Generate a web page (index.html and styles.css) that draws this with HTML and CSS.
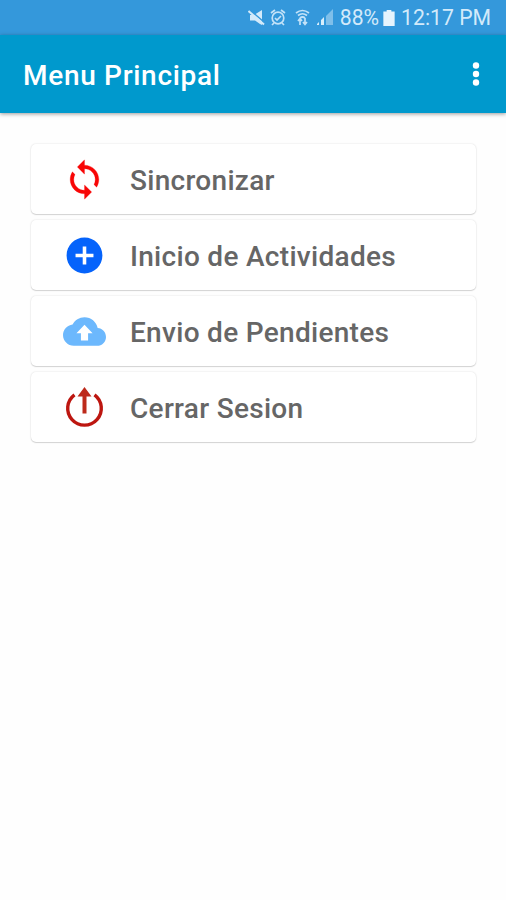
FILE: index.html
```html
<!DOCTYPE html>
<html lang="es">
<head>
<meta charset="utf-8">
<title>Menu Principal</title>
<link rel="stylesheet" href="styles.css">
</head>
<body>
<div class="status">
  <svg class="status-icons" width="86" height="20" viewBox="0 0 86 20">
    <path fill="#d3eafa" d="M2 6h4l8-5v15l-2-1-5-3.500H2z"/>
    <path d="M1.500 .500l15 13" stroke="#3498db" stroke-width="1.500"/>
    <path d="M.5 2l15.500 13.500" stroke="#d3eafa" stroke-width="2"/>
    <g fill="none" stroke="#c3e2f8" stroke-width="1.700">
      <circle cx="30" cy="9" r="5.800"/>
      <path d="M23 4l4-3M37 4l-4-3M27 9l2 2 4-4M26 14l-2 2M34 14l2 2"/>
      <path d="M48 4q6.500-5 13 0M50 6.500q4.500-3.500 9 0M52 9q2.500-2 5 0"/>
      <path d="M52 10v6M50 12l2-2.500 2 2.500M57 9v6M55 13l2 2.500 2-2.500"/>
    </g>
    <path fill="#7fbfea" d="M85 0v16h-7V7z"/>
    <path fill="#d9eefb" d="M76 8v8h-3v-5zM71 13v3h-2v-1z"/>
  </svg>
  <span class="percent">88%</span>
  <svg class="battery" width="12" height="16" viewBox="0 0 12 17"><path fill="#e6f4fd" d="M3.500 0h5v1.500H12V17H0V1.500h3.500z"/></svg>
  <span class="clock">12:17 PM</span>
</div>
<header class="bar">
  <h1 class="title">Menu Principal</h1>
  <svg class="more" width="8" height="24" viewBox="0 0 8 24" fill="#fff"><circle cx="4" cy="3.500" r="3.200"/><circle cx="4" cy="12" r="3.200"/><circle cx="4" cy="20.500" r="3.200"/></svg>
</header>
<main class="menu">
  <div class="card">
    <svg class="icon" viewBox="0 0 24 24"><path fill="#f80606" stroke="#f80606" stroke-width=".15" d="M12 4V1L8 5l4 4V6c3.310 0 6 2.690 6 6 0 1.010-.25 1.970-.7 2.800l1.460 1.460C19.540 15.030 20 13.570 20 12c0-4.420-3.580-8-8-8zm0 14c-3.310 0-6-2.690-6-6 0-1.010.25-1.970.7-2.800L5.240 7.740C4.460 8.970 4 10.430 4 12c0 4.420 3.580 8 8 8v3l4-4-4-4v3z"/></svg>
    <span class="label">Sincronizar</span>
  </div>
  <div class="card">
    <svg class="icon" viewBox="0 0 24 24"><path fill="#0563fb" d="M12 2C6.480 2 2 6.480 2 12s4.480 10 10 10 10-4.480 10-10S17.520 2 12 2zm5 11h-4v4h-2v-4H7v-2h4V7h2v4h4v2z"/></svg>
    <span class="label">Inicio de Actividades</span>
  </div>
  <div class="card">
    <svg class="icon" viewBox="0 0 24 24"><path fill="#6cb8fd" d="M19.350 10.040C18.670 6.590 15.640 4 12 4 9.110 4 6.600 5.640 5.350 8.040 2.340 8.360 0 10.910 0 14c0 3.310 2.690 6 6 6h13c2.760 0 5-2.240 5-5 0-2.640-2.050-4.780-4.650-4.960zM14 13v4h-4v-4H7.500L12 8.300l4.500 4.700H14z"/></svg>
    <span class="label">Envio de Pendientes</span>
  </div>
  <div class="card">
    <svg class="icon" viewBox="0 0 43 43"><path d="M11.500 8.800A16.800 16.800 0 1 0 31.500 8.800" fill="none" stroke="#bd1610" stroke-width="3.400"/><path fill="#bd2a1b" d="M21.500 1l7 9.500h-5V27.500h-4V10.500h-5z"/></svg>
    <span class="label">Cerrar Sesion</span>
  </div>
</main>
</body>
</html>
```
FILE: styles.css
```css
body {
  margin: 0;
  min-height: 900px;
  background: #fefefe;
  font-family: Roboto, "Liberation Sans", sans-serif;
}
.status {
  display: flex;
  align-items: center;
  justify-content: flex-end;
  box-sizing: border-box;
  height: 35px;
  padding-right: 15px;
  background: #3498db;
  color: #d3eafa;
  font-size: 21.200px;
}
.status-icons {
  margin: 3px 6px 0 0;
}
.battery {
  margin: 0 6px 0 4px;
}
.bar {
  display: flex;
  align-items: center;
  justify-content: space-between;
  box-sizing: border-box;
  height: 78px;
  padding: 0 26px 0 23px;
  background: #0099cd;
  box-shadow: 0 1px 4px rgba(0, 0, 0, .4);
}
.title {
  margin: 2px 0 0;
  color: #fff;
  font-size: 28px;
  font-weight: 500;
  letter-spacing: .7px;
}
.more {
  margin-bottom: 1px;
}
.menu {
  display: grid;
  gap: 6px;
  padding: 31px 30px 0 31px;
}
.card {
  display: flex;
  align-items: center;
  box-sizing: border-box;
  height: 70px;
  padding-left: 31.500px;
  border-radius: 5px;
  background: #fff;
  box-shadow: 0 0 2px rgba(0, 0, 0, .14), 0 1px 1px rgba(0, 0, 0, .14);
}
.icon {
  width: 43px;
  height: 43px;
}
.label {
  margin: 2px 0 0 24.500px;
  color: #666;
  font-size: 28px;
  font-weight: 500;
  letter-spacing: .3px;
}
```
